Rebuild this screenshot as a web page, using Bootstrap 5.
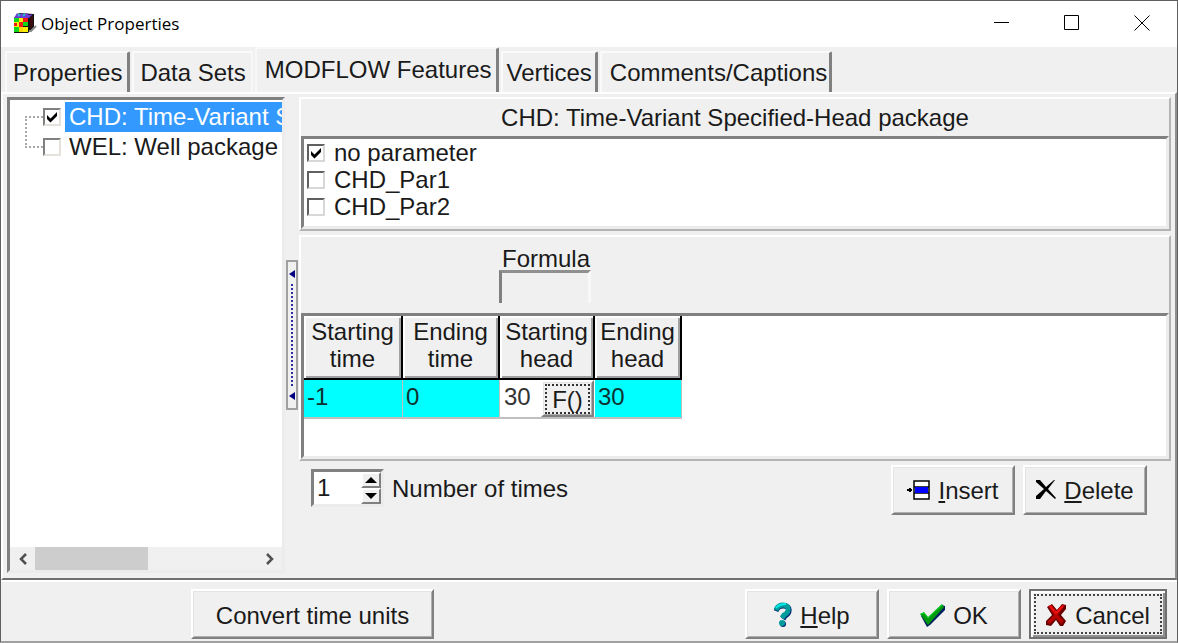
<!DOCTYPE html>
<html lang="en">
<head>
<meta charset="utf-8">
<meta name="viewport" content="width=device-width, initial-scale=1">
<title>Object Properties</title>
<link href="https://cdn.jsdelivr.net/npm/bootstrap@5.3.0/dist/css/bootstrap.min.css" rel="stylesheet">
<style>
  :root { --face:#f0f0f0; --dark:#808080; --mid:#b0b0b0; }
  body { font-family:"Liberation Sans",Arial,sans-serif; font-size:24px; line-height:27px; color:#1a1a1a; background:var(--face); }
  .dialog { min-height:100vh; border:1px solid #606060; border-bottom:2px solid #a0a0a0; background:var(--face); }
  .titlebar { height:46px; background:#fff; padding-left:12px; }
  .titlebar h1 { font-family:"Open Sans","Segoe UI",sans-serif; font-size:17px; line-height:24px; color:#000; font-weight:400; }
  .win-btn { width:70px; height:46px; border:0; background:none; padding:0; }
  .win-btn svg { display:block; margin:0 auto 2px; }

  .nav-tabs { --bs-nav-tabs-border-width:0; padding:2px 0 0 4px; height:45px; align-items:flex-end; flex-wrap:nowrap; gap:2px; }
  .nav-tabs .nav-link { color:#1a1a1a; background:var(--face); border:0 solid; border-radius:2px 2px 0 0; white-space:nowrap; height:41px; padding:0 5px 0 6px; margin:0; border-top:2px solid #fafafa; border-left:2px solid #fafafa; border-right:3px solid var(--dark); }
  .nav-tabs .nav-link.active { color:#1a1a1a; background:var(--face); height:45px; padding:0 5px 2px 8px; border-color:#f8f8f8 var(--dark) transparent #f8f8f8; }
  .nav-tabs .flat-end { border-right-color:#f8f8f8; border-right-width:2px; }
  .nav-tabs .snug { padding:0 3px; }
  .nav-tabs .last-tab { padding:0 2px 0 8px; }

  .page { border:2px solid; border-color:#fff #909090 #707070 #fff; padding:3px 4px 5px 4px; }
  .raised { border:2px solid; border-color:#fff #b4b4b4 #b4b4b4 #fff; }
  .sunken { border:3px solid; border-color:#808080 #ececec #ececec #808080; background:#fff; }

  .tree { width:278px; }
  .tree-rows { position:relative; padding:2px 0 0 33px; }
  .tree-rows::before { content:""; position:absolute; left:15px; top:16px; width:18px; height:32px; border:2px dotted #a8a8a8; border-right:0; }
  .tree-row { height:30px; gap:4px; white-space:nowrap; }
  .tree-row label { height:30px; line-height:29px; padding-left:4px; }
  .tree-row.selected label { background:#3399ff; color:#fff; }

  input[type=checkbox].tick { appearance:none; flex:none; width:18px; height:18px; margin:0; background:#fff no-repeat center/12px; border:2px solid; border-color:#808080 #e4e2da #e4e2da #808080; }
  .param input[type=checkbox].tick { border-color:#606060 #d8d8d8 #d8d8d8 #606060; }
  input[type=checkbox].tick:checked { background-image:url("data:image/svg+xml,%3Csvg xmlns='http://www.w3.org/2000/svg' viewBox='0 0 12 12'%3E%3Cpath d='M1 4l3.5 3.5L11 1v4l-6.5 6.5L1 8z'/%3E%3C/svg%3E"); }

  .hscroll { height:23px; background:var(--face); padding:0 4px; }
  .hscroll button { border:0; background:none; padding:0; width:17px; height:23px; line-height:0; }
  .hscroll .thumb { width:113px; background:#cdcdcd; margin-left:4px; }

  .splitter { width:12px; height:150px; border:2px solid #a0a0a0; margin:0 1px; background:var(--face); color:#000080; padding:8px 0; }
  .splitter i { width:2px; border-left:2px dotted #2c2ca0; margin:6px 0; }

  .caption { height:37px; line-height:37px; }
  .params { height:93px; }
  .param { height:27px; gap:9px; padding-left:3px; }
  .param .tick { margin-bottom:4px; }

  .formula { margin-left:198px; width:92px; padding-top:7px; height:76px; }
  .formula label { padding-left:3px; height:26px; line-height:30px; }
  .formula input { width:100%; height:33px; background:var(--face); border:3px solid; border-color:#909090 #f8f8f8 transparent #808080; border-bottom:0; border-radius:0; }
  .times-box { min-height:146px; }
  .times { border-collapse:separate; border-spacing:0; table-layout:fixed; width:378px; }
  .times th { font-weight:400; text-align:center; height:64px; padding:2px 0 6px; background:var(--face); border:0 solid #000; border-width:0 2px 2px 0; box-shadow:inset 2px 2px #fff, inset -2px -2px #a0a0a0; }
  .times td { height:39px; padding:0 0 4px 3px; background:#0ff; border:0 solid #c0c0c0; border-width:0 1px 2px 0; color:#103030; }
  .times td.editing { background:#fff; padding:0; border-right:0; }
  .editing input { width:41px; border:0; padding:0 0 4px 4px; outline:0; color:#333; }

  .bevel { border-radius:0; background:var(--face); color:#1a1a1a; font-size:24px; line-height:27px; border:2px solid; border-color:#fff #808080 #808080 #fff; box-shadow:inset 1px 1px #e4e4e4, inset -1px -1px #b0b0b0; padding:0; }
  .bevel:hover { background:var(--face); color:#1a1a1a; }
  .fx { width:53px; height:37px; padding:2px; }
  .fx span { display:block; border:2px dotted #333; width:45px; height:30px; line-height:28px; }

  .spin { width:73px; height:38px; }
  .spin input { width:47px; border:0; padding:0 0 2px 3px; appearance:textfield; outline:0; color:#1a1a1a; }
  .spin input::-webkit-inner-spin-button { appearance:none; }
  .spin .bevel { width:20px; height:16px; line-height:0; box-shadow:none; }
  .spin .bevel svg { display:block; margin:auto; }
  .tools { padding:4px 24px 0 12px; }
  .tools > label { padding-top:10px; }
  .tools > .bevel { width:124px; height:50px; }

  .actions { border-top:2px solid #fff; padding:7px 10px 0 190px; height:61px; }
  .actions .bevel { width:134px; height:50px; padding-top:2px; }
  .actions .convert { width:243px; }
  .actions .cancel { width:138px; border-color:#707070; padding:3px; box-shadow:inset 2px 2px #fff, inset -2px -2px #909090; }
  .cancel > span { border:2px dotted #444; height:40px; padding-top:2px; }
</style>
</head>
<body>
<main class="dialog d-flex flex-column">
  <header class="titlebar d-flex align-items-center">
    <svg width="24" height="24" viewBox="0 0 24 24" aria-hidden="true">
      <path d="M1 6l5-5 15 1v13l-6 6H1z" fill="#111"/>
      <path d="M1 6l3-5 2 2 3-2 2 2 3-2 2 2 4-1-4 4z" fill="#7038d8"/>
      <path d="M5 4l2-2M10 4l2-2" stroke="#20c0d0" stroke-width="2"/>
      <path d="M17 6l3-3v11l-3 3z" fill="#3b0d0d"/>
      <path d="M1 6h5v4H1zM10 10h5v4h-5zM1 15h5v5H1z" fill="#10d818"/>
      <path d="M6 6h4v4H6zM1 10h5v5H1zM10 15h5v5h-5z" fill="#f8f000"/>
      <path d="M10 6h5v4h-5zM6 10h4v5H6zM1 11h3v3H1z" fill="#f01818"/>
      <path d="M6 15h4v5H6z" fill="#f8d800"/>
      <path d="M16 19h2l5-5" fill="none" stroke="#888" stroke-width="2"/>
    </svg>
    <h1 class="mb-0 me-auto ps-1">Object Properties</h1>
    <button class="win-btn" aria-label="Minimize"><svg width="16" height="16"><path d="M0 7.500h15" stroke="#000"/></svg></button>
    <button class="win-btn" aria-label="Maximize"><svg width="16" height="16"><path d="M.5.5h14v14H.5z" fill="none" stroke="#000"/></svg></button>
    <button class="win-btn" aria-label="Close"><svg width="16" height="16"><path d="M.5.5l15 15m0-15l-15 15" stroke="#000"/></svg></button>
  </header>

  <ul class="nav nav-tabs" role="tablist">
    <li class="nav-item"><button class="nav-link" role="tab">Properties</button></li>
    <li class="nav-item"><button class="nav-link flat-end" role="tab">Data Sets</button></li>
    <li class="nav-item"><button class="nav-link active" role="tab" aria-selected="true">MODFLOW Features</button></li>
    <li class="nav-item"><button class="nav-link snug" role="tab">Vertices</button></li>
    <li class="nav-item"><button class="nav-link last-tab" role="tab">Comments/Captions</button></li>
  </ul>

  <section class="page d-flex flex-grow-1">
    <div class="tree sunken d-flex flex-column flex-shrink-0 overflow-hidden">
      <div class="tree-rows flex-grow-1">
        <div class="tree-row selected d-flex align-items-center"><input class="tick" type="checkbox" id="chd" checked><label class="flex-grow-1" for="chd">CHD: Time-Variant Specified-Head package</label></div>
        <div class="tree-row d-flex align-items-center"><input class="tick" type="checkbox" id="wel"><label for="wel">WEL: Well package</label></div>
      </div>
      <div class="hscroll d-flex">
        <button aria-label="Scroll left"><svg width="12" height="12"><path d="M9 1L4 6l5 5" fill="none" stroke="#505050" stroke-width="2.500"/></svg></button>
        <div class="thumb"></div>
        <button class="ms-auto" aria-label="Scroll right"><svg width="12" height="12"><path d="M3 1l5 5-5 5" fill="none" stroke="#505050" stroke-width="2.500"/></svg></button>
      </div>
    </div>

    <div class="splitter d-flex flex-column align-items-center flex-shrink-0 align-self-center">
      <svg width="6" height="8"><path d="M6 0v8L0 4z" fill="currentColor"/></svg>
      <i class="flex-grow-1"></i>
      <svg width="6" height="8"><path d="M6 0v8L0 4z" fill="currentColor"/></svg>
    </div>

    <div class="flex-grow-1">
      <div class="raised mb-1">
        <div class="caption text-center">CHD: Time-Variant Specified-Head package</div>
        <div class="params sunken">
          <div class="param d-flex align-items-center"><input class="tick" type="checkbox" id="p0" checked><label for="p0">no parameter</label></div>
          <div class="param d-flex align-items-center"><input class="tick" type="checkbox" id="p1"><label for="p1">CHD_Par1</label></div>
          <div class="param d-flex align-items-center"><input class="tick" type="checkbox" id="p2"><label for="p2">CHD_Par2</label></div>
        </div>
      </div>

      <div class="raised">
        <div class="formula d-flex flex-column"><label for="formula">Formula</label><input type="text" id="formula"></div>
        <div class="times-box sunken">
          <table class="times">
            <colgroup><col style="width:99px"><col style="width:97px"><col style="width:95px"><col style="width:87px"></colgroup>
            <thead><tr><th>Starting<br>time</th><th>Ending<br>time</th><th>Starting<br>head</th><th>Ending<br>head</th></tr></thead>
            <tbody><tr><td>-1</td><td>0</td>
              <td class="editing"><div class="d-flex"><input type="text" value="30" aria-label="Starting head"><button class="bevel fx" aria-label="Edit formula"><span>F()</span></button></div></td>
              <td>30</td></tr></tbody>
          </table>
        </div>
      </div>

      <div class="tools d-flex align-items-start">
        <div class="spin sunken d-flex mt-1">
          <input type="number" id="count" value="1">
          <div class="d-flex flex-column">
            <button class="bevel" aria-label="Increase"><svg width="12" height="6"><path d="M0 6l6-6 6 6z"/></svg></button>
            <button class="bevel" aria-label="Decrease"><svg width="12" height="6"><path d="M0 0l6 6 6-6z"/></svg></button>
          </div>
        </div>
        <label class="me-auto ps-2" for="count">Number of times</label>
        <button class="bevel d-flex align-items-center justify-content-center me-2">
          <svg class="me-2" width="23" height="20" viewBox="0 0 23 20"><path d="M7 1h15v18H7zM7 7h15M7 13h15" fill="#fff" stroke="#000" stroke-width="1.500"/><path d="M8 7h13v6H8z" fill="#00f"/><path d="M0 10h5M3 8v4" stroke="#000" stroke-width="2"/></svg>
          <span><u>I</u>nsert</span></button>
        <button class="bevel d-flex align-items-center justify-content-center">
          <svg class="me-2" width="20" height="20" viewBox="0 0 20 20"><path d="M0 0h4l6 7 8-7h1l-7 9 8 9-1 1-9-8-6 8H0v-3l8-7-8-7z"/></svg>
          <span><u>D</u>elete</span></button>
      </div>
    </div>
  </section>

  <footer class="actions d-flex gap-2">
    <button class="bevel convert me-auto">Convert time units</button>
    <button class="bevel d-flex align-items-center justify-content-center">
      <svg class="me-2" width="18" height="26" viewBox="0 0 18 26"><path d="M2 9Q4 4 9 4q7 0 6 5 0 3-4 5l-2 3" fill="none" stroke="#002878" stroke-width="5"/><path d="M2 8Q4 3 9 3q6 0 5 5 0 3-4 5l-2 3" fill="none" stroke="#009c9c" stroke-width="5"/><path d="M2 6Q5 2 12 2" fill="none" stroke="#00e8e8" stroke-width="2"/><circle cx="9" cy="22" r="3" fill="#002878"/><circle cx="8" cy="21" r="3" fill="#009c9c"/></svg>
      <span><u>H</u>elp</span></button>
    <button class="bevel d-flex align-items-center justify-content-center">
      <svg class="me-2" width="25" height="23" viewBox="0 0 25 23"><path d="M1 12l4-2 4 5L22 1l3 1v4L10 21l-3 2z" fill="#002060"/><path d="M0 10l4-2 4 5L22 0l2 3L8 21z" fill="#009a10"/><path d="M1 10l3-1 4 5L22 1" fill="none" stroke="#00e020"/></svg>
      <span>OK</span></button>
    <button class="bevel cancel"><span class="d-flex align-items-center justify-content-center">
      <svg class="me-2" width="21" height="22" viewBox="0 0 21 22"><path d="M1 3l5-3 5 6 5-6 4 1v4l-5 6 5 6-3 5h-3l-4-6-5 6-5-1v-4l6-6z" fill="#600"/><path d="M2 2l4-1 4 6 6-6h3L12 11l6 6-3 3-5-6-6 6-3-2 7-7z" fill="#b80000"/><path d="M4 2l6 7 7-7" fill="none" stroke="#e81010" stroke-width="2"/></svg>
      <span>Cancel</span></span></button>
  </footer>
</main>
<script src="https://cdn.jsdelivr.net/npm/bootstrap@5.3.0/dist/js/bootstrap.bundle.min.js"></script>
</body>
</html>
